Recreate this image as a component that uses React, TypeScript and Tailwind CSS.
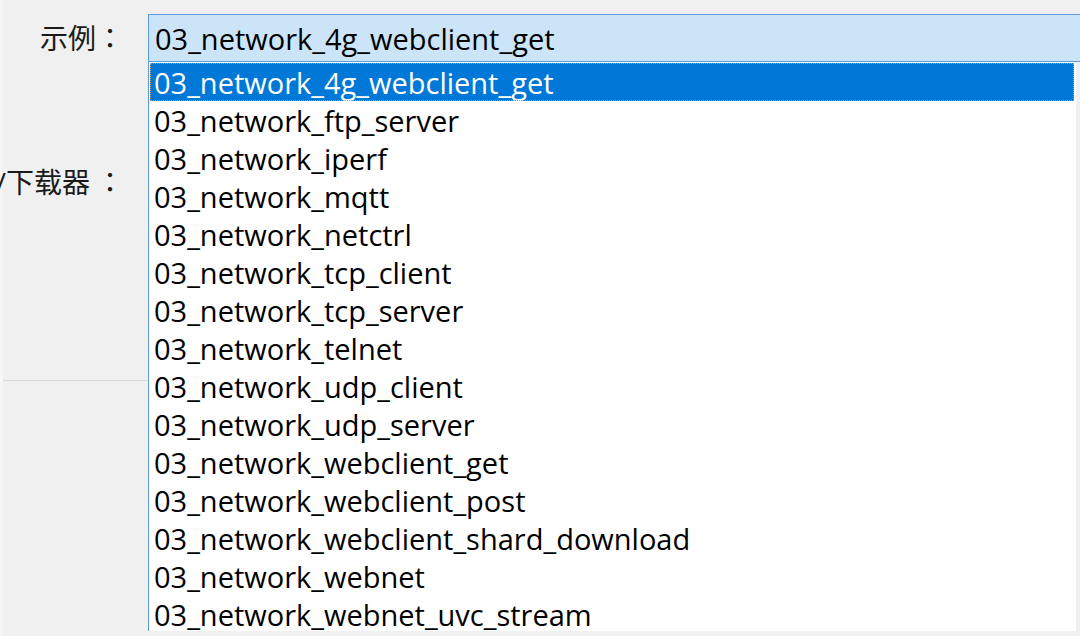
const examples = [
  '03_network_4g_webclient_get',
  '03_network_ftp_server',
  '03_network_iperf',
  '03_network_mqtt',
  '03_network_netctrl',
  '03_network_tcp_client',
  '03_network_tcp_server',
  '03_network_telnet',
  '03_network_udp_client',
  '03_network_udp_server',
  '03_network_webclient_get',
  '03_network_webclient_post',
  '03_network_webclient_shard_download',
  '03_network_webnet',
  '03_network_webnet_uvc_stream',
];

const font = { fontFamily: '"Open Sans", "Noto Sans CJK JP", sans-serif' };

export default function App() {
  const selected = examples[0];

  return (
    <div
      className="w-[1080px] h-[636px] bg-[#f0f0f0] overflow-hidden flex text-black"
      style={font}
    >
      <div className="w-[3px] shrink-0 bg-[#f6f6f6]" />
      {/* labels */}
      <div className="w-[145px] shrink-0 flex flex-col text-[#1a1a1a]">
        <div className="h-[14px]" />
        <div className="h-[48px] flex items-center justify-end pr-[24px] text-[28px] whitespace-nowrap">
          <span>示例</span>
          <span className="w-[28px] text-center">：</span>
        </div>
        <div className="h-[100px]" />
        <div className="h-[40px] flex items-center justify-end pr-[24px] text-[28px] whitespace-nowrap">
          <span>/下载器</span>
          <span className="w-[34px] text-center pl-[6px]">：</span>
        </div>
        <div className="h-[179px] border-b border-[#d9d9d9]" />
      </div>

      {/* combobox + open list */}
      <div className="flex flex-col pt-[14px]">
        <div className="w-[940px] h-[48px] border border-[#5b9be0] bg-[#cce4f7] flex items-center pl-[6px] text-[29px] leading-none whitespace-nowrap">
          {selected}
        </div>
        <div className="w-[928px] h-[569px] bg-white border-l border-[#5b9be0] overflow-hidden pr-[2px] pl-px pt-px">
          {examples.map((name) => {
            const active = name === selected;
            return (
              <div
                key={name}
                className={
                  active
                    ? 'h-[38px] flex items-center pl-[4px] text-[29px] leading-none whitespace-nowrap bg-[#0078d7] text-white outline outline-1 outline-dotted outline-[#c9935a] -outline-offset-1'
                    : 'h-[38px] flex items-center pl-[4px] text-[29px] leading-none whitespace-nowrap'
                }
              >
                {name}
              </div>
            );
          })}
        </div>
      </div>
    </div>
  );
}
